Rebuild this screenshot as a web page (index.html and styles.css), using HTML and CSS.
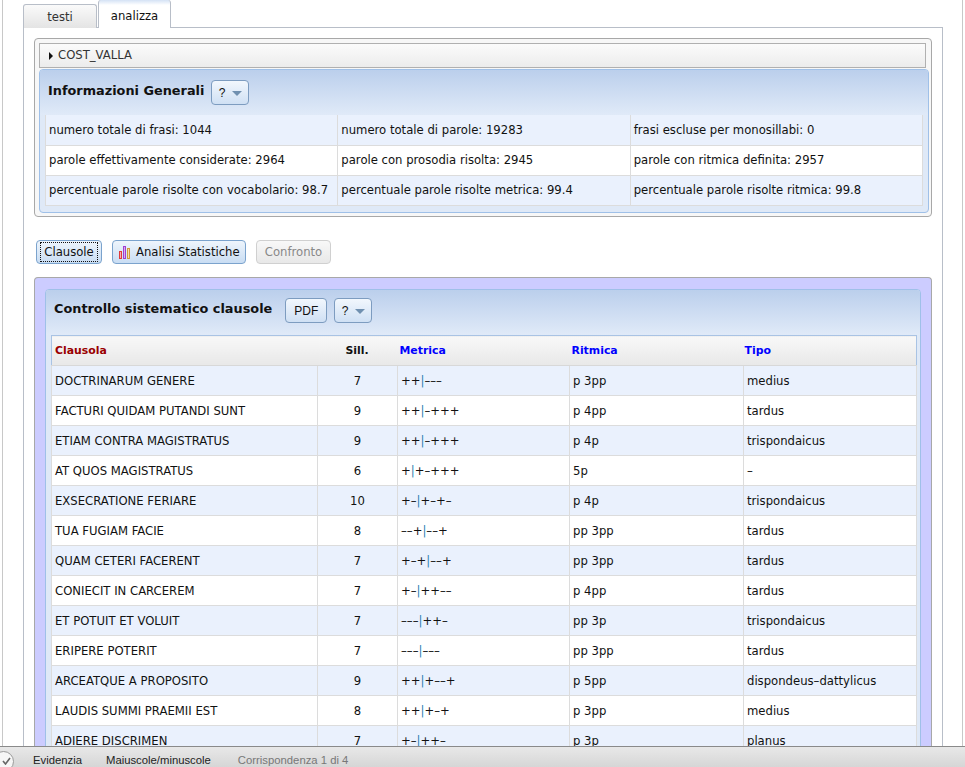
FILE: index.html
```html
<!DOCTYPE html>
<html lang="it">
<head>
<meta charset="utf-8">
<title>analizza</title>
<link rel="stylesheet" href="styles.css">
</head>
<body>
<div class="page">
  <div class="frame">
    <div class="tabs">
      <div class="tab">testi</div>
      <div class="tab tab-active">analizza</div>
    </div>
    <div class="tab-panel">
      <section class="outer">
        <div class="accordion"><span class="arrow"></span>COST_VALLA</div>
        <div class="panel info">
          <div class="panel-head">
            <h2>Informazioni Generali</h2>
            <button class="btn-head btn-help">? <span class="caret"></span></button>
          </div>
          <table class="info-table">
            <tr class="odd"><td>numero totale di frasi: 1044</td><td>numero totale di parole: 19283</td><td>frasi escluse per monosillabi: 0</td></tr>
            <tr><td>parole effettivamente considerate: 2964</td><td>parole con prosodia risolta: 2945</td><td>parole con ritmica definita: 2957</td></tr>
            <tr class="odd"><td>percentuale parole risolte con vocabolario: 98.7</td><td>percentuale parole risolte metrica: 99.4</td><td>percentuale parole risolte ritmica: 99.8</td></tr>
          </table>
        </div>
      </section>
      <div class="actions">
        <button class="btn btn-on btn-first"><span class="focus">Clausole</span></button>
        <button class="btn btn-on btn-stats">
          <svg class="bars" width="12" height="13" viewBox="0 0 12 13"><rect x="0.5" y="5.5" width="2" height="7" fill="#f7b0b0" stroke="#e03a3a"/><rect x="4.5" y="0.5" width="2" height="12" fill="#d9b0ee" stroke="#a040d0"/><rect x="8.5" y="2.5" width="2" height="10" fill="#f3dcae" stroke="#d09a3a"/></svg>
          <span>Analisi Statistiche</span>
        </button>
        <button class="btn btn-off">Confronto</button>
      </div>
      <section class="lavender">
        <div class="panel clausole">
          <div class="panel-head head-clausole">
            <h2>Controllo sistematico clausole</h2>
            <button class="btn-head btn-pdf">PDF</button>
            <button class="btn-head btn-help">? <span class="caret"></span></button>
          </div>
          <table class="data-table">
            <colgroup><col class="c1"><col class="c2"><col class="c3"><col class="c4"><col class="c5"></colgroup>
            <thead>
              <tr><th class="dark-red">Clausola</th><th class="center">Sill.</th><th class="link">Metrica</th><th class="link">Ritmica</th><th class="link last">Tipo</th></tr>
            </thead>
            <tbody>
              <tr class="odd"><td>DOCTRINARUM GENERE</td><td class="center">7</td><td class="metric">++<i>|</i>–––</td><td>p 3pp</td><td>medius</td></tr>
              <tr><td>FACTURI QUIDAM PUTANDI SUNT</td><td class="center">9</td><td class="metric">++<i>|</i>–+++</td><td>p 4pp</td><td>tardus</td></tr>
              <tr class="odd"><td>ETIAM CONTRA MAGISTRATUS</td><td class="center">9</td><td class="metric">++<i>|</i>–+++</td><td>p 4p</td><td>trispondaicus</td></tr>
              <tr><td>AT QUOS MAGISTRATUS</td><td class="center">6</td><td class="metric">+<i>|</i>+–+++</td><td>5p</td><td>–</td></tr>
              <tr class="odd"><td>EXSECRATIONE FERIARE</td><td class="center">10</td><td class="metric">+–<i>|</i>+–+–</td><td>p 4p</td><td>trispondaicus</td></tr>
              <tr><td>TUA FUGIAM FACIE</td><td class="center">8</td><td class="metric">––+<i>|</i>––+</td><td>pp 3pp</td><td>tardus</td></tr>
              <tr class="odd"><td>QUAM CETERI FACERENT</td><td class="center">7</td><td class="metric">+–+<i>|</i>––+</td><td>pp 3pp</td><td>tardus</td></tr>
              <tr><td>CONIECIT IN CARCEREM</td><td class="center">7</td><td class="metric">+–<i>|</i>++––</td><td>p 4pp</td><td>tardus</td></tr>
              <tr class="odd"><td>ET POTUIT ET VOLUIT</td><td class="center">7</td><td class="metric">–––<i>|</i>++–</td><td>pp 3p</td><td>trispondaicus</td></tr>
              <tr><td>ERIPERE POTERIT</td><td class="center">7</td><td class="metric">–––<i>|</i>–––</td><td>pp 3pp</td><td>tardus</td></tr>
              <tr class="odd"><td>ARCEATQUE A PROPOSITO</td><td class="center">9</td><td class="metric">++<i>|</i>+––+</td><td>p 5pp</td><td>dispondeus–dattylicus</td></tr>
              <tr><td>LAUDIS SUMMI PRAEMII EST</td><td class="center">8</td><td class="metric">++<i>|</i>+–+</td><td>p 3pp</td><td>medius</td></tr>
              <tr class="odd"><td>ADIERE DISCRIMEN</td><td class="center">7</td><td class="metric">+–<i>|</i>++–</td><td>p 3p</td><td>planus</td></tr>
            </tbody>
          </table>
        </div>
      </section>
    </div>
  </div>
</div>
<footer class="findbar">
  <span class="check"><svg width="9" height="8" viewBox="0 0 9 8"><path d="M1 4l2.5 3L8 1" fill="none" stroke="#666" stroke-width="1.6"/></svg></span>
  <span class="find-item">Evidenzia</span>
  <span class="find-item">Maiuscole/minuscole</span>
  <span class="find-item find-muted">Corrispondenza 1 di 4</span>
</footer>
</body>
</html>
```
FILE: styles.css
```css
* { box-sizing: border-box; }
html, body { margin: 0; height: 100%; overflow: hidden; background: #fff; }
body { display: flex; flex-direction: column; height: 767px; font: 11.65px "DejaVu Sans", sans-serif; color: #111; }
.page { flex: 1; min-height: 0; overflow: hidden; margin: 0 2px; border-left: 1px solid #c8c8c8; border-right: 1px solid #c8c8c8; padding: 0 19px 0 20px; }
.frame { height: 100%; }
.tabs { display: flex; align-items: flex-end; height: 28px; margin-bottom: -1px; position: relative; z-index: 1; gap: 1px; }
.tab { width: 74px; height: 24px; border: 1px solid #b8bec8; border-bottom: 0; border-radius: 3px 3px 0 0; background: linear-gradient(#fafafa, #e4e4e4); text-align: center; line-height: 24px; color: #333; }
.tab-active { width: 73px; height: 28px; background: linear-gradient(#d4e2f5 0, #fff 5px); border-top: 0; color: #111; padding-top: 4px; }
.tab-panel { height: 740px; border: 1px solid #b8bec8; border-bottom: 0; padding: 10px 10px 0; }
.outer { height: 179px; border: 1px solid #a8a8a8; border-radius: 4px; padding: 4px; background: #f7f7f7; }
.accordion { height: 25px; border: 1px solid #b0b0b0; background: linear-gradient(#fbfbfb, #ececec); line-height: 23px; padding-left: 9px; color: #333; display: flex; align-items: center; gap: 5px; margin-right: 1px; }
.arrow { width: 0; height: 0; border-left: 4px solid #111; border-top: 4px solid transparent; border-bottom: 4px solid transparent; }
.panel { border: 1px solid #9fc0e8; border-radius: 4px; background: #dfe9f7; }
.info { height: 144px; margin-top: 1px; padding: 0 5px; margin-right: -2px; }
.panel-head { display: flex; align-items: center; background: linear-gradient(#bbcfec, #e0eaf8); margin: 0 -5px; padding: 0 8px; height: 45px; border-radius: 3px 3px 0 0; }
.panel-head h2 { margin: -4px 0 0; font-size: 12.85px; font-weight: bold; color: #111; }
.btn-head { font: 12px "Liberation Sans", sans-serif; height: 25px; border: 1px solid #7d9cc0; border-radius: 4px; background: linear-gradient(#f2f7fd, #cfe0f4); color: #111; padding: 0; }
.btn-help { width: 38px; margin-left: 7px; }
.caret { display: inline-block; width: 0; height: 0; border-top: 5px solid #7090b0; border-left: 5px solid transparent; border-right: 5px solid transparent; margin-left: 3px; vertical-align: 1px; }
table { border-collapse: collapse; table-layout: fixed; }
.info-table { width: 878px; border: 1px solid #a9c3e4; border-top: 0; background: #fff; }
.info-table td { height: 30px; padding: 0 3px; border: 1px solid #dcdcdc; border-top: 0; white-space: nowrap; color: #111; }
.odd td { background: #eaf1fd; }
.actions { display: flex; gap: 10px; margin: 23px 0 13px 2px; height: 24px; }
.btn { font: 11.65px "DejaVu Sans", sans-serif; height: 24px; padding: 0 7px; border: 1px solid #7ba3cd; border-radius: 4px; background: linear-gradient(#eef5fc, #c9ddf3); color: #111; display: flex; align-items: center; gap: 5px; white-space: nowrap; }
.btn-first { width: 66px; justify-content: center; }
.btn-stats { width: 134px; padding: 0 0 0 6px; }
.focus { outline: 1px dotted #111; padding: 2px 3px; margin: 0 -3px; line-height: 14px; }
.bars { display: block; }
.btn-off { width: 75px; justify-content: center; background: linear-gradient(#f8f8f8, #e8e8e8); border-color: #d0d0d0; color: #888; }
.lavender { height: 500px; background: #ccccff; border: 1px solid #a8a8a8; border-bottom: 0; border-radius: 4px 4px 0 0; padding: 11px 10px 0; }
.clausole { height: 480px; padding: 0 5px; }
.head-clausole { height: 45px; padding: 0 8px 4px; }
.head-clausole h2 { margin-right: 13px; }
.btn-pdf { width: 42px; }
.data-table { width: 865px; border: 1px solid #a9c3e4; background: #fff; }
.c1 { width: 266px; } .c2 { width: 80px; } .c3 { width: 172px; } .c4 { width: 174px; } .c5 { width: 173px; }
.data-table th { height: 30px; padding: 0 3px 0 2px; font-size: 10.9px; text-align: left; font-weight: bold; background: linear-gradient(#f8f8f8, #e8e8e8); border-bottom: 1px solid #d8d8d8; }
.data-table th.dark-red { padding-left: 3px; }
.data-table th.last { padding-left: 1px; }
.data-table td { height: 30px; padding: 0 3px; border: 1px solid #dcdcdc; border-top: 0; white-space: nowrap; }
.data-table .center { text-align: center; }
.dark-red { color: #990000; }
.link { color: #0000ff; }
.metric i { font-style: normal; color: #2b7fb0; }
.findbar { height: 21px; flex: none; border-top: 1px solid #8a8a8a; background: linear-gradient(#e8e8e8, #d6d6d6); display: flex; align-items: center; font: 11.3px "Liberation Sans", sans-serif; color: #222; position: relative; overflow: hidden; padding: 5px 0 0 33px; gap: 24px; }
.check { position: absolute; left: -7px; top: 4px; width: 21px; height: 21px; border: 1px solid #9a9a9a; border-radius: 50%; background: #f6f6f6; display: flex; align-items: flex-start; justify-content: center; padding: 5px 0 0 5px; }
.find-muted { color: #777; margin-left: 3px; }
```
